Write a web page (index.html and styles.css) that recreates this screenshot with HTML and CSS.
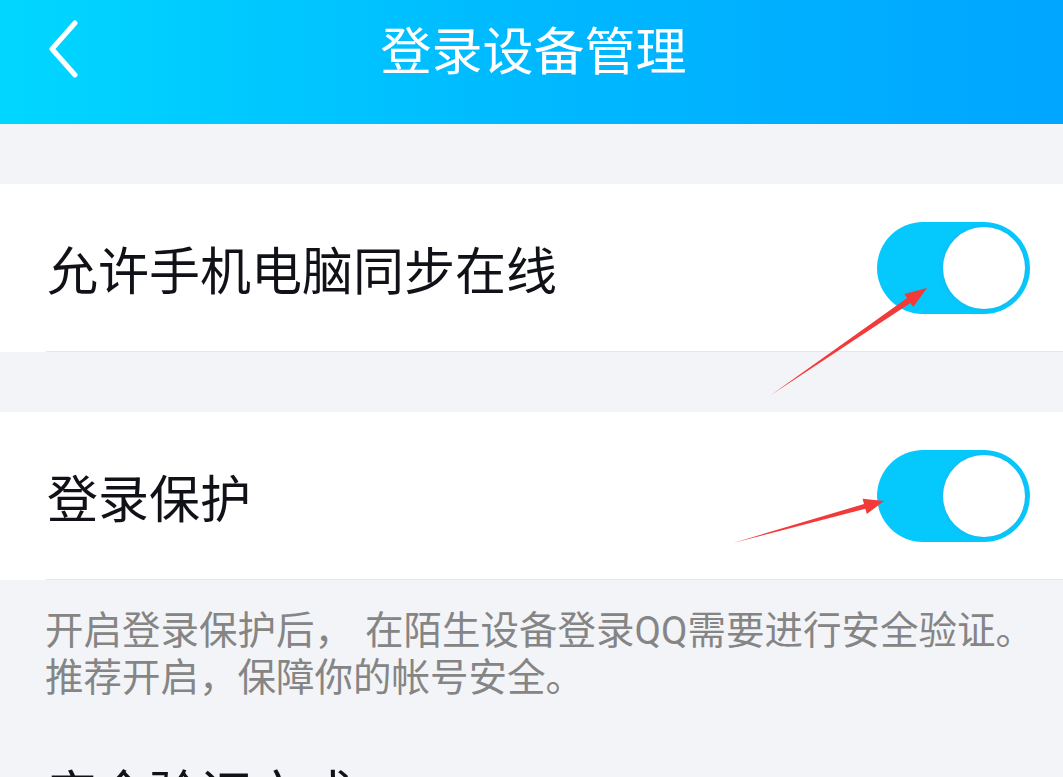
FILE: index.html
```html
<!DOCTYPE html>
<html lang="zh-CN">
<head>
  <meta charset="UTF-8">
  <meta name="viewport" content="width=device-width, initial-scale=1.0">
  <title>登录设备管理</title>
  <link rel="stylesheet" href="styles.css">
</head>
<body>
  <header class="topbar">
    <a class="back" href="#" aria-label="返回">
      <svg width="40" height="60" viewBox="0 0 40 60">
        <path d="M27 3 L4 29 L27 55" fill="none" stroke="#fff" stroke-width="5" stroke-linecap="round" stroke-linejoin="round"/>
      </svg>
    </a>
    <h1>登录设备管理</h1>
  </header>

  <main class="settings">
    <section class="card">
      <div class="row">
        <span class="label">允许手机电脑同步在线</span>
        <span class="toggle on"><span class="knob"></span></span>
      </div>
    </section>

    <section class="card">
      <div class="row">
        <span class="label">登录保护</span>
        <span class="toggle on"><span class="knob"></span></span>
      </div>
    </section>

    <p class="tips">开启登录保护后<span class="comma">，</span>在陌生设备登录QQ需要进行安全验证。<br>推荐开启，保障你的帐号安全。</p>

    <h2 class="section-title">安全验证方式</h2>
  </main>

  <svg class="marks" width="1063" height="777" viewBox="0 0 1063 777">
    <polygon points="771,395 910.5,303 913.3,307.1 927,288 904.3,293.9 907.1,298" fill="#f33a3a"/>
    <polygon points="733,543 865.4,508.8 866.8,514.1 884,501 862.6,498.7 864,504" fill="#f33a3a"/>
  </svg>
</body>
</html>
```

FILE: styles.css
```css
* {
  margin: 0;
  padding: 0;
  box-sizing: border-box;
}

:root {
  --bg: #f3f4f8;
  --line: #e6e7ec;
  --text: #111218;
  --grey: #858585;
  --toggle: #05c9fd;
}

body {
  font-family: Roboto, "Noto Sans CJK SC", sans-serif;
  background-color: var(--bg);
  width: 1063px;
  height: 777px;
  overflow: hidden;
  position: relative;
}

.topbar {
  height: 124px;
  background: linear-gradient(90deg, #00d7ff 0%, #00b9ff 50%, #00a6ff 100%);
  display: flex;
  align-items: center;
  justify-content: center;
  position: relative;
}

.back {
  position: absolute;
  left: 48px;
  top: 20px;
  display: block;
  line-height: 0;
}

.topbar h1 {
  color: #fff;
  font-size: 51px;
  font-weight: 400;
  margin: -28px 0 0 4px;
}

.settings {
  padding-top: 60px;
}

.card {
  background-color: #fff;
  margin-bottom: 60px;
}

.card + .card {
  margin-bottom: 0;
}

.row {
  height: 168px;
  margin-left: 46px;
  padding-right: 33px;
  border-bottom: 1px solid var(--line);
  display: flex;
  align-items: center;
  justify-content: space-between;
}

.label {
  font-size: 51px;
  color: var(--text);
  padding-left: 1px;
}

.toggle {
  width: 153px;
  height: 92px;
  border-radius: 46px;
  background-color: var(--toggle);
  position: relative;
  display: block;
}

.knob {
  position: absolute;
  right: 5px;
  top: 5px;
  width: 82px;
  height: 82px;
  border-radius: 50%;
  background-color: #fff;
  box-shadow: 0 0 3px 1px rgba(40, 170, 230, 0.55);
}

.tips {
  font-size: 38.5px;
  line-height: 47px;
  color: var(--grey);
  padding: 27px 0 0 45px;
}

.tips .comma {
  letter-spacing: 12px;
}

.section-title {
  font-size: 51px;
  font-weight: 400;
  color: var(--text);
  line-height: 60px;
  margin: 65px 0 0 47px;
}

.marks {
  position: absolute;
  left: 0;
  top: 0;
  pointer-events: none;
}
```
